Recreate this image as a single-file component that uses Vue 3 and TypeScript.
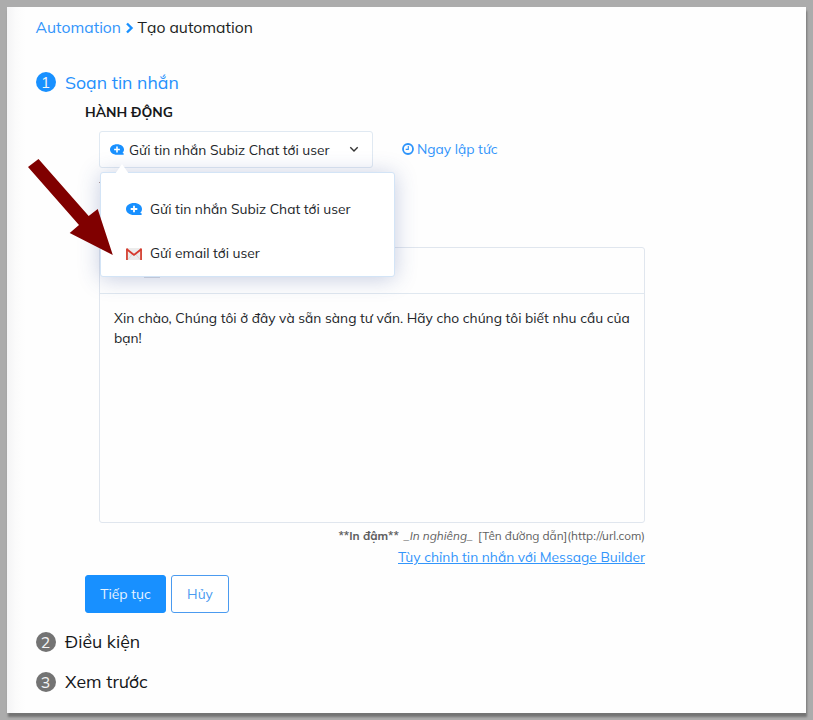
<script setup lang="ts">
interface Option {
  icon: 'chat' | 'mail'
  label: string
}

const options: Option[] = [
  { icon: 'chat', label: 'Gửi tin nhắn Subiz Chat tới user' },
  { icon: 'mail', label: 'Gửi email tới user' },
]

const nextSteps = [
  { index: 2, title: 'Điều kiện' },
  { index: 3, title: 'Xem trước' },
]
</script>

<template>
  <main class="sheet">
    <nav class="breadcrumb">
      <a class="crumb-link">Automation</a>
      <svg class="crumb-sep" width="9" height="12" viewBox="0 0 9 12"><path d="M2 1.5 6.500 6 2 10.500" /></svg>
      <span class="crumb-current">Tạo automation</span>
    </nav>

    <section class="step active">
      <span class="badge">1</span>
      <h2>Soạn tin nhắn</h2>
    </section>

    <div class="body">
      <h3>HÀNH ĐỘNG</h3>
      <div class="content">
        <div class="action-row">
          <div class="select">
            <svg class="chat-icon" width="14" height="11" viewBox="0 0 16 12">
              <path class="bubble" d="M8 0C3.500 0 0 2.500 0 6s3.500 6 8 6h7.600v-1.700l-1.400-.4C15.400 8.900 16 7.500 16 6c0-3.500-3.500-6-8-6Z" />
              <path class="plus" d="M8 2.700v6.600M4.700 6h6.600" />
            </svg>
            <span class="label">{{ options[0].label }}</span>
            <svg class="chevron" width="10" height="7" viewBox="0 0 10 7"><path d="M1.300 1.300 5 5l3.700-3.700" /></svg>

            <div class="menu">
              <svg class="pointer" width="14" height="10" viewBox="0 0 14 10"><path d="M0 10 7 0l7 10Z" /></svg>
              <div v-for="o in options" :key="o.label" class="option">
                <svg v-if="o.icon === 'chat'" class="chat-icon" width="16" height="12" viewBox="0 0 16 12">
                  <path class="bubble" d="M8 0C3.500 0 0 2.500 0 6s3.500 6 8 6h7.600v-1.700l-1.400-.4C15.400 8.900 16 7.500 16 6c0-3.500-3.500-6-8-6Z" />
                  <path class="plus" d="M8 2.700v6.600M4.700 6h6.600" />
                </svg>
                <svg v-else class="mail-icon" width="16" height="12" viewBox="0 0 16 12">
                  <path class="paper" d="M1 0h14v12H1Z" />
                  <path class="fold" d="M2 11.500 6.500 6M14 11.500 9.500 6" />
                  <path class="side" d="M0 .5h1.900V12H0ZM14.100.5H16V12h-1.900Z" />
                  <path class="flap" d="m.8 1.200 7.200 5.700 7.200-5.700" />
                </svg>
                <span class="label">{{ o.label }}</span>
              </div>
            </div>
          </div>
          <a class="timing">
            <svg width="12" height="12" viewBox="0 0 12 12"><circle cx="6" cy="6" r="5" /><path d="M6.300 3v3.400H3.700" /></svg>
            <span>Ngay lập tức</span>
          </a>
        </div>
        <div class="divider"></div>

        <div class="editor">
          <div class="toolbar"><span class="tool"></span></div>
          <p>Xin chào, Chúng tôi ở đây và sẵn sàng tư vấn. Hãy cho chúng tôi biết nhu cầu của<br />bạn!</p>
        </div>
        <div class="hints">
          <b>**In đậm**</b>
          <i>_In nghiêng_</i>
          <span>[Tên đường dẫn](http://url.com)</span>
        </div>
        <div class="builder"><a>Tùy chỉnh tin nhắn với Message Builder</a></div>
      </div>
      <div class="buttons">
        <button class="primary">Tiếp tục</button>
        <button class="secondary">Hủy</button>
      </div>
    </div>

    <section v-for="s in nextSteps" :key="s.index" class="step">
      <span class="badge">{{ s.index }}</span>
      <h2>{{ s.title }}</h2>
    </section>

    <svg class="arrow" width="86" height="98" viewBox="0 0 86 98">
      <path d="M0 9 10.500 1 60.700 58 69.700 51 84.800 97 41.700 75 51 67Z" />
    </svg>
  </main>
</template>

<style>
body {
  background: #acacac;
}
</style>

<style scoped>
.sheet {
  position: relative;
  box-sizing: border-box;
  width: 799px;
  height: 706px;
  margin: 7px;
  padding: 8px 29px 0;
  background: linear-gradient(90deg, #f4f4f5 0, #fbfbfb 9px, #fefefe 18px);
  box-shadow: 1px 4px 2px #747474;
  font-family: Mulish, Muli, "Open Sans", sans-serif;
  font-size: 13.77px;
  color: #222529;
}
svg {
  flex: none;
}
a {
  color: #3295fb;
}
.breadcrumb {
  display: flex;
  align-items: center;
  height: 24px;
  margin-left: -0.5px;
  font-size: 15.7px;
}
.crumb-sep {
  margin: 2px 4px 0 3.5px;
}
.crumb-sep path {
  fill: none;
  stroke: #1890ff;
  stroke-width: 2.4;
}
.crumb-current {
  color: #1c1e22;
}
.step {
  display: flex;
  align-items: center;
  height: 40px;
  gap: 10px;
}
.step.active {
  height: 24px;
  margin-top: 31px;
}
.badge {
  width: 20px;
  height: 20px;
  margin-left: -0.5px;
  margin-right: -0.5px;
  border-radius: 50%;
  background: #737373;
  color: #f5f5f5;
  font-size: 15.7px;
  line-height: 20px;
  text-align: center;
}
.active .badge {
  background: #1890ff;
}
h2 {
  margin: 0;
  padding-bottom: 2px;
  font-size: 17.7px;
  font-weight: 400;
  color: #15171a;
  white-space: nowrap;
}
.active h2 {
  padding-bottom: 0;
  color: #2590fc;
}
.body {
  padding-left: 49px;
}
h3 {
  margin: 8px 0 0;
  font-size: 13.8px;
  line-height: 20px;
  font-weight: 700;
  color: #15171a;
}
.content {
  width: 546px;
  margin: 9px 0 0 14px;
}
.action-row {
  display: flex;
  align-items: center;
  gap: 29px;
  height: 37px;
}
.select {
  position: relative;
  box-sizing: border-box;
  display: flex;
  align-items: center;
  width: 273.5px;
  height: 37px;
  padding-left: 10px;
  border: 1px solid #e0e9f2;
  border-radius: 3px;
  background: #fff;
}
.label {
  white-space: nowrap;
}
.select > .label {
  width: 201px;
  margin-left: 5px;
}
.bubble {
  fill: #1890ff;
}
.plus {
  fill: none;
  stroke: #fff;
  stroke-width: 1.8;
}
.chevron {
  margin-left: 18.5px;
}
.chevron path {
  fill: none;
  stroke: #333;
  stroke-width: 1.4;
}
.menu {
  position: absolute;
  z-index: 2;
  left: 0;
  top: 40px;
  box-sizing: border-box;
  width: 295px;
  height: 105px;
  padding: 14px 25px 0;
  border: 1px solid #d3e4f6;
  border-radius: 3px;
  background: #fff;
  box-shadow: 0 2px 22px rgba(50, 75, 150, 0.28);
}
.pointer {
  position: absolute;
  left: 14px;
  top: -9px;
  fill: #fff;
}
.option {
  display: flex;
  align-items: center;
  gap: 8px;
  height: 44px;
}
.option .label {
  padding-bottom: 2px;
}
.mail-icon {
  margin-top: 2px;
}
.paper {
  fill: #ececec;
}
.fold {
  fill: none;
  stroke: #d8d8d8;
}
.side {
  fill: #d54b3d;
}
.flap {
  fill: none;
  stroke: #d63a2e;
  stroke-width: 1.9;
}
.timing {
  display: flex;
  align-items: center;
  gap: 3.5px;
  margin-top: -2px;
  white-space: nowrap;
}
.timing svg {
  fill: none;
  stroke: #2d94fa;
  stroke-width: 1.8;
}
.timing path {
  stroke-width: 1.1;
}
.divider {
  width: 20px;
  height: 1px;
  margin-top: 14px;
  background: #b09a94;
}
.editor {
  box-sizing: border-box;
  height: 276px;
  margin-top: 64px;
  border: 1px solid #e0e6ee;
  border-radius: 3px;
}
.toolbar {
  display: flex;
  box-sizing: border-box;
  height: 46px;
  padding: 14px 0 0 44px;
  border-bottom: 1px solid #e0e8f0;
}
.tool {
  width: 16px;
  height: 16px;
  background: #dadde3;
}
.editor p {
  margin: 14px 14px 0;
  line-height: 20px;
  white-space: nowrap;
}
.hints {
  display: flex;
  justify-content: flex-end;
  gap: 5px;
  margin-top: 4px;
  font-size: 11.8px;
  line-height: 18px;
  color: #5f5f5f;
  white-space: nowrap;
}
.builder {
  padding-top: 1px;
  line-height: 22px;
  text-align: right;
  white-space: nowrap;
}
.builder a {
  text-decoration: underline;
}
.buttons {
  display: flex;
  gap: 5px;
  margin: 7px 0 9px;
}
button {
  box-sizing: border-box;
  height: 38px;
  padding: 0 0 2px;
  border: 1px solid #1890ff;
  border-radius: 3px;
  font: inherit;
}
.primary {
  width: 81px;
  background: #1890ff;
  color: #e8f4ff;
}
.secondary {
  width: 58px;
  border-color: #4b9bf0;
  background: #fff;
  color: #4b9bf0;
}
.arrow {
  position: absolute;
  z-index: 3;
  left: 21px;
  top: 151px;
  fill: #800000;
}
</style>
